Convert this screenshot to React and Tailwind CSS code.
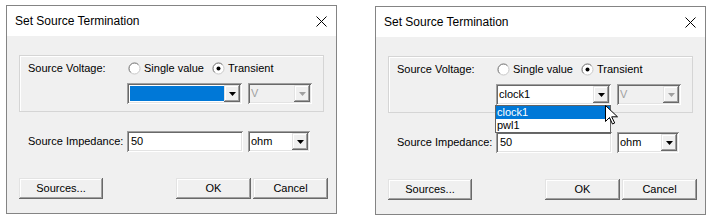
import React from 'react';

const sunken = "shadow-[inset_1px_1px_#a0a0a0,inset_-1px_-1px_#ffffff,inset_2px_2px_#696969,inset_-2px_-2px_#e3e3e3]";
const raised = "shadow-[inset_-1px_-1px_#696969,inset_1px_1px_#e3e3e3,inset_-2px_-2px_#a0a0a0,inset_2px_2px_#ffffff]";

function Arrow({ disabled }) {
  return (
    <svg width="7" height="4" viewBox="0 0 7 4">
      <path d="M0 0h7L3.5 4z" fill={disabled ? "#a0a0a0" : "#000"} />
    </svg>
  );
}

function Combo({ width, disabled, children, open }) {
  return (
    <div className={`relative h-[21px] p-[2px] flex ${sunken} ${disabled ? 'bg-[#f0f0f0]' : 'bg-white'}`} style={{ width }}>
      <div className={`flex-1 flex items-center pl-[1px] leading-[13px] ${disabled ? 'text-[#a0a0a0]' : 'text-black'}`}>
        {children}
      </div>
      <div className={`w-[16px] h-full flex items-center justify-center bg-[#f0f0f0] ${raised}`}>
        <Arrow disabled={disabled} />
      </div>
      {open && (
        <>
          <div className="absolute left-[-1px] top-[21px] w-[116px] border border-[#646464] bg-white z-10 leading-[13px]">
            <div className="h-[13px] bg-[#0078d7] text-white pl-[1px]">clock1</div>
            <div className="h-[13px] text-black pl-[1px]">pwl1</div>
          </div>
          <svg className="absolute left-[109px] top-[21px] z-20" width="13" height="20" viewBox="0 0 13 20">
            <path d="M0.5 0.5v16l4-4 3 6.5 2.2-1-3-6.2h5.8z" fill="#fff" stroke="#000" strokeWidth="1" strokeLinejoin="miter" />
          </svg>
        </>
      )}
    </div>
  );
}

function Radio({ checked }) {
  return (
    <svg width="13" height="13" viewBox="0 0 13 13">
      <circle cx="6.5" cy="6.5" r="5.5" fill="#fff" stroke="#c8c8c8" />
      <path d="M2.6 10.4A5.5 5.5 0 0 1 10.4 2.6" fill="none" stroke="#808080" />
      {checked && <circle cx="6.5" cy="6.5" r="2" fill="#000" />}
    </svg>
  );
}

function Button({ children, className }) {
  return (
    <div className={`h-[21px] flex items-center justify-center bg-[#f0f0f0] ${raised} ${className}`}>
      {children}
    </div>
  );
}

function Dialog({ open, className }) {
  return (
    <div className={`w-[331px] h-[209px] border border-[#848484] flex flex-col bg-[#f0f0f0] ${className}`}>
      <div className="h-[30px] bg-white flex items-center justify-between pl-[8px] pr-[9px]">
        <span className="text-[12px] text-black">Set Source Termination</span>
        <svg width="11" height="11" viewBox="0 0 11 11">
          <path d="M0.5 0.5l10 10M10.5 0.5l-10 10" stroke="#000" strokeWidth="1" />
        </svg>
      </div>

      <div className="mx-[12px] mt-[19px] h-[57px] border border-[#d5d5d5] shadow-[inset_1px_1px_#ffffff] pl-[8px] pt-[6px]">
        <div className="flex h-[13px] items-center leading-[13px]">
          <span className="w-[99px]">Source Voltage:</span>
          <div className="flex items-center w-[84px] ml-[1px]">
            <Radio />
            <span className="ml-[3px]">Single value</span>
          </div>
          <Radio checked />
          <span className="ml-[3px]">Transient</span>
        </div>
        <div className="flex mt-[8px] ml-[99px]">
          <Combo width={115} open={open}>
            {open ? (
              <span>clock1</span>
            ) : (
              <div className="w-full h-[15px] bg-[#0078d7]" />
            )}
          </Combo>
          <div className="ml-[6px]">
            <Combo width={64} disabled>V</Combo>
          </div>
        </div>
      </div>

      <div className="flex items-center mt-[19px] pl-[21px]">
        <span className="w-[99px]">Source Impedance:</span>
        <div className={`w-[116px] h-[21px] bg-white flex items-center pl-[4px] ${sunken}`}>50</div>
        <div className="ml-[5px]">
          <Combo width={62}>ohm</Combo>
        </div>
      </div>

      <div className="flex items-center mt-[26px] pl-[12px] pr-[8px]">
        <Button className="w-[84px]">Sources...</Button>
        <div className="flex-1" />
        <Button className="w-[75px]">OK</Button>
        <Button className="w-[75px] ml-[2px]">Cancel</Button>
      </div>
    </div>
  );
}

export default function App() {
  return (
    <div className="w-[712px] h-[221px] bg-white flex items-start text-[11px] text-black" style={{ fontFamily: '"Liberation Sans", Arial, sans-serif' }}>
      <Dialog className="ml-[6px] mt-[5px]" />
      <Dialog open className="ml-[38px] mt-[6px]" />
    </div>
  );
}
